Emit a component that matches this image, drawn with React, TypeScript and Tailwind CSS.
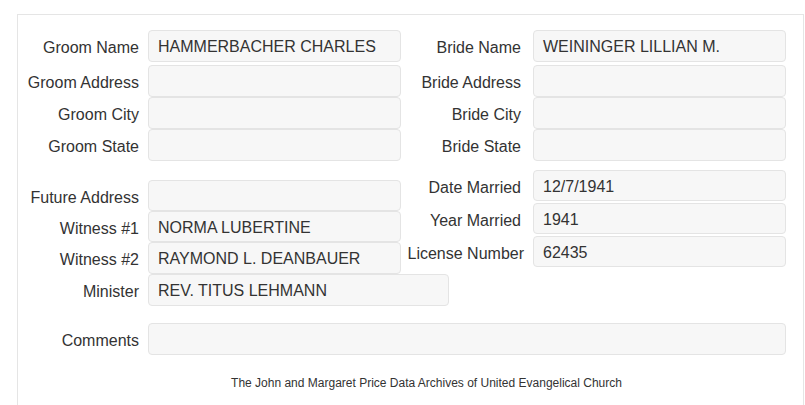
const font = { fontFamily: '"Liberation Sans", Arial, sans-serif' };

type FieldProps = {
  label: string;
  value?: string;
  labelW: string;
  inputW: string;
  gap: string;
  h: string;
  extra?: string;
};

const Field = ({ label, value, labelW, inputW, gap, h, extra }: FieldProps) => (
  <div className={`flex items-center ${gap} ${extra ?? ''}`}>
    <label className={`${labelW} shrink-0 pt-[4px] text-right whitespace-nowrap text-[16px] text-[#333]`}>{label}</label>
    <div
      className={`${inputW} ${h} flex items-center rounded-[4px] border border-[#e4e4e4] bg-[#f7f7f7] pl-[9px] pt-[2px] text-[16px] text-[#333]`}
    >
      {value}
    </div>
  </div>
);

// Marriage record detail panel
export default function App() {
  return (
    <div className="min-h-[405px] bg-white" style={font}>
      <div className="ml-[17px] mt-[14px] w-[787px] h-[391px] border border-b-0 border-[#e5e5e5] pt-[15px]">
        {/* names and addresses */}
        <div className="flex">
          <div className="flex flex-col">
            <Field label="Groom Name" value="HAMMERBACHER CHARLES" labelW="w-[121px]" inputW="w-[253px]" gap="gap-[9px]" h="h-[32px]" extra="mb-[3px]" />
            <Field label="Groom Address" labelW="w-[121px]" inputW="w-[253px]" gap="gap-[9px]" h="h-[32px]" />
            <Field label="Groom City" labelW="w-[121px]" inputW="w-[253px]" gap="gap-[9px]" h="h-[32px]" />
            <Field label="Groom State" labelW="w-[121px]" inputW="w-[253px]" gap="gap-[9px]" h="h-[32px]" />
          </div>
          <div className="ml-[-1px] flex flex-col">
            <Field label="Bride Name" value="WEININGER LILLIAN M." labelW="w-[121px]" inputW="w-[253px]" gap="gap-[12px]" h="h-[32px]" extra="mb-[3px]" />
            <Field label="Bride Address" labelW="w-[121px]" inputW="w-[253px]" gap="gap-[12px]" h="h-[32px]" />
            <Field label="Bride City" labelW="w-[121px]" inputW="w-[253px]" gap="gap-[12px]" h="h-[32px]" />
            <Field label="Bride State" labelW="w-[121px]" inputW="w-[253px]" gap="gap-[12px]" h="h-[32px]" />
          </div>
        </div>

        {/* marriage details */}
        <div className="flex items-start">
          <div className="mt-[19px] flex flex-col">
            <Field label="Future Address" labelW="w-[121px]" inputW="w-[253px]" gap="gap-[9px]" h="h-[31px]" />
            <Field label="Witness #1" value="NORMA LUBERTINE" labelW="w-[121px]" inputW="w-[253px]" gap="gap-[9px]" h="h-[31px]" />
            <Field label="Witness #2" value="RAYMOND L. DEANBAUER" labelW="w-[121px]" inputW="w-[253px]" gap="gap-[9px]" h="h-[32px]" />
            <Field label="Minister" value="REV. TITUS LEHMANN" labelW="w-[121px]" inputW="w-[301px]" gap="gap-[9px]" h="h-[32px]" />
          </div>
          <div className="ml-[-49px] mt-[9px] flex flex-col">
            <Field label="Date Married" value="12/7/1941" labelW="w-[121px]" inputW="w-[253px]" gap="gap-[12px]" h="h-[31px]" extra="mb-[2px]" />
            <Field label="Year Married" value="1941" labelW="w-[121px]" inputW="w-[253px]" gap="gap-[12px]" h="h-[31px]" extra="mb-[2px]" />
            <Field label="License Number" value="62435" labelW="w-[124px]" inputW="w-[253px]" gap="gap-[9px]" h="h-[31px]" />
          </div>
        </div>

        <div className="mt-[17px]">
          <Field label="Comments" labelW="w-[121px]" inputW="w-[638px]" gap="gap-[9px]" h="h-[32px]" />
        </div>

        <p className="mt-[19px] pl-[32px] text-center text-[12px] text-[#333]">
          The John and Margaret Price Data Archives of United Evangelical Church
        </p>
      </div>
    </div>
  );
}
